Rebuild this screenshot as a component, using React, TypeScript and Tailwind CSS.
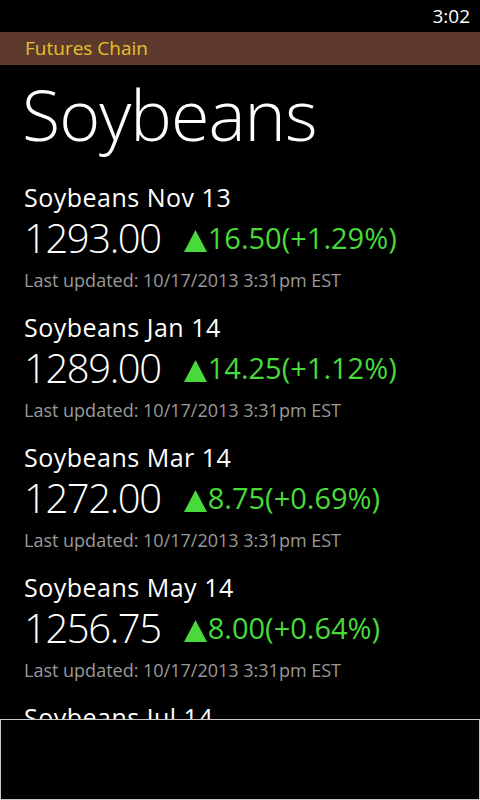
import React from "react";

const items = [
  { name: "Soybeans Nov 13", price: "1293.00", change: "16.50(+1.29%)" },
  { name: "Soybeans Jan 14", price: "1289.00", change: "14.25(+1.12%)" },
  { name: "Soybeans Mar 14", price: "1272.00", change: "8.75(+0.69%)" },
  { name: "Soybeans May 14", price: "1256.75", change: "8.00(+0.64%)" },
];

const font = { fontFamily: '"Open Sans", "Noto Sans", sans-serif' };

export default function App() {
  return (
    <div className="w-[480px] h-[800px] bg-black text-white flex flex-col overflow-hidden" style={font}>
      <div className="h-8 flex items-center justify-end pr-[10px] text-[19px] leading-none shrink-0">3:02</div>
      <div className="h-[33px] bg-[#5d3a2b] flex items-center pl-[25px] text-[19px] text-[#e5c02b] shrink-0">
        Futures Chain
      </div>
      <div className="flex-1 overflow-hidden">
        <div className="pl-[22px] text-[70px] font-light leading-none tracking-[-1px] mt-[14px] h-[100px]">Soybeans</div>
        {items.map((it) => (
          <div key={it.name} className="pl-[24px] h-[130px]">
            <div className="text-[25px] leading-[36px] tracking-[0.5px]">{it.name}</div>
            <div className="flex items-end h-[46px]">
              <span className="text-[40px] font-light leading-[46px] tracking-[-1.4px]">{it.price}</span>
              <span className="ml-[23px] flex items-end text-[29px] leading-[46px] text-[#49d93a]">
                <svg width="23" height="22" viewBox="0 0 23 22" className="mb-[9px] mr-[1px]">
                  <polygon points="11.5,0 23,22 0,22" fill="#49d93a" />
                </svg>
                {it.change}
              </span>
            </div>
            <div className="text-[18px] leading-[38px] text-[#9a9a9a]">Last updated: 10/17/2013 3:31pm EST</div>
          </div>
        ))}
        <div className="pl-[24px] text-[25px] leading-[36px] tracking-[0.5px]">Soybeans Jul 14</div>
      </div>
      <div className="h-[81px] shrink-0 border border-[#c8c8c8] bg-black" />
    </div>
  );
}
